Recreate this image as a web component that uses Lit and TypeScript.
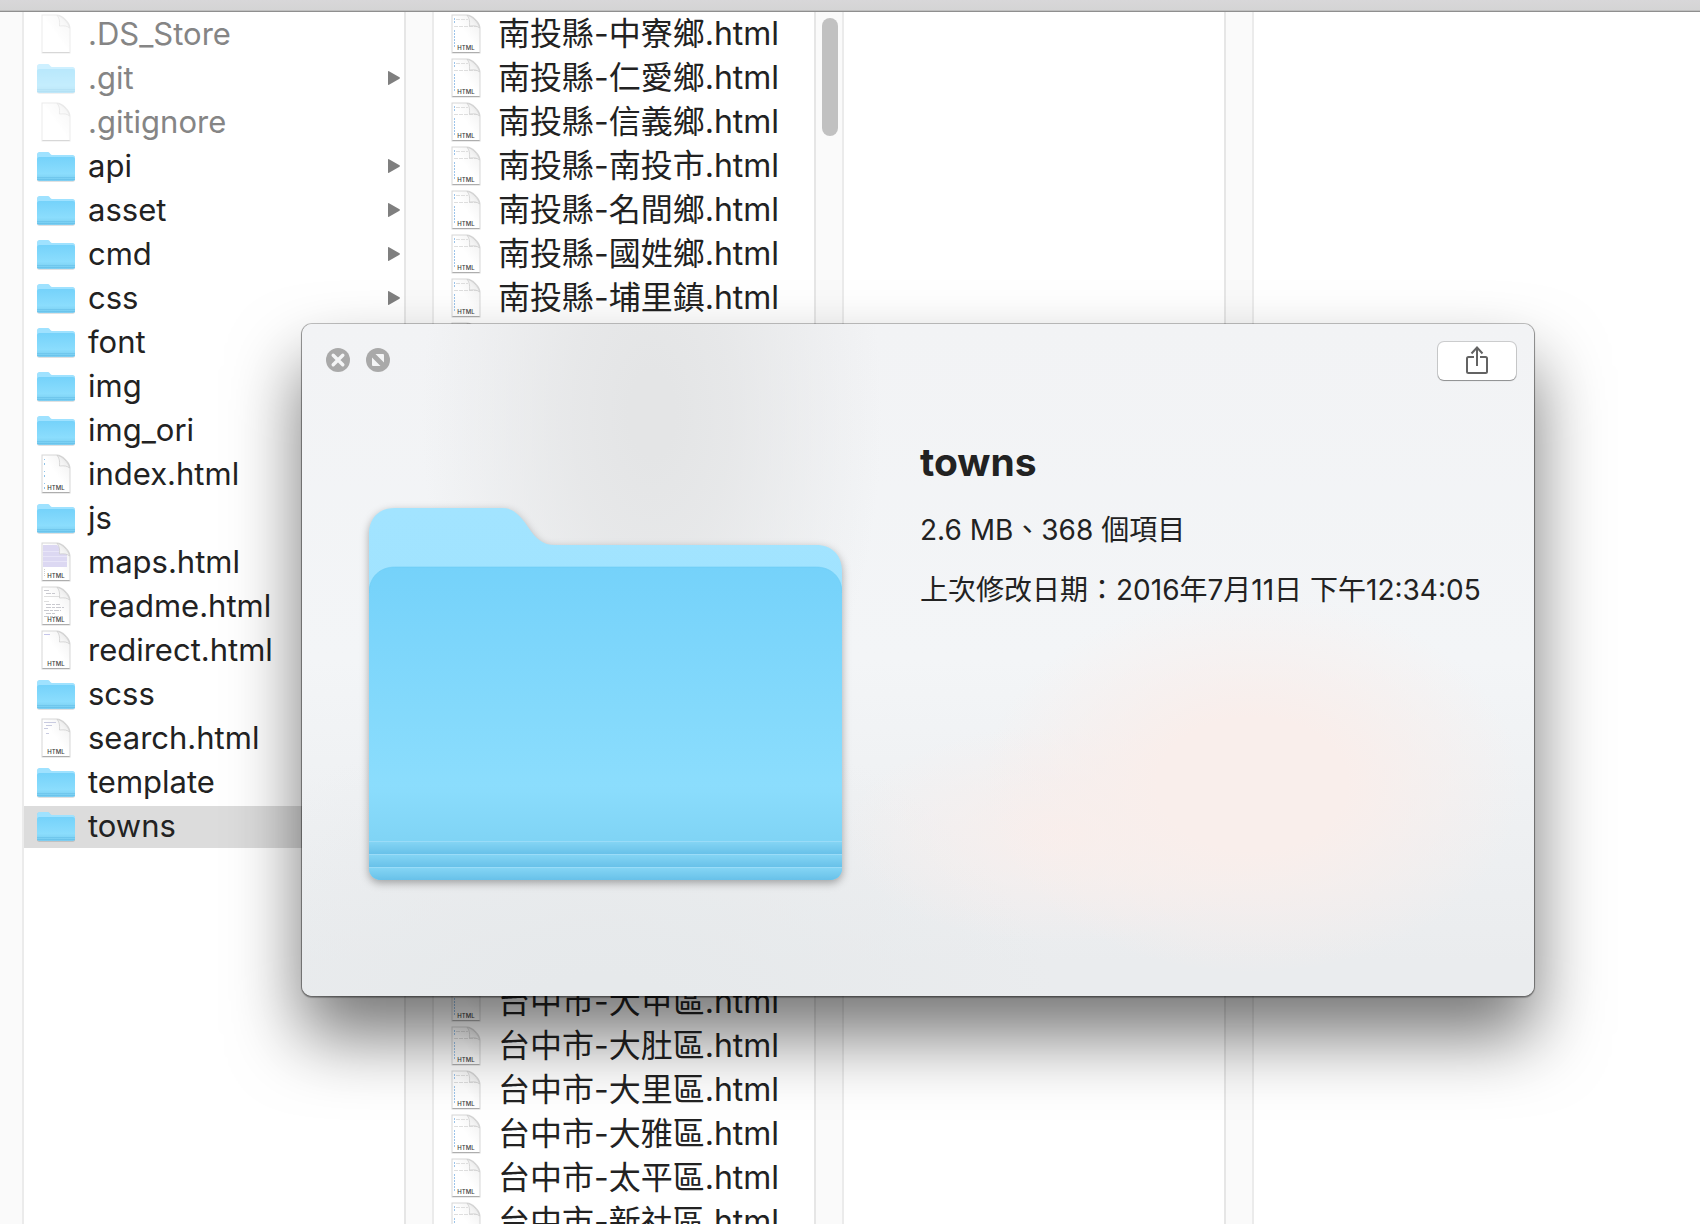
import { LitElement, html, css, svg, nothing } from "lit";
import { customElement, state } from "lit/decorators.js";
import { classMap } from "lit/directives/class-map.js";

type Preview = "none" | "code" | "maps" | "readme" | "redirect" | "search" | "index";
interface Entry {
  name: string;
  kind: "folder" | "file";
  preview?: Preview;
  hidden?: boolean;
}

const folder = (name: string, hidden = false): Entry => ({ name, kind: "folder", hidden });
const file = (name: string, preview: Preview, hidden = false): Entry => ({ name, kind: "file", preview, hidden });

const ROOT: Entry[] = [
  file(".DS_Store", "none", true),
  folder(".git", true),
  file(".gitignore", "none", true),
  folder("api"),
  folder("asset"),
  folder("cmd"),
  folder("css"),
  folder("font"),
  folder("img"),
  folder("img_ori"),
  file("index.html", "index"),
  folder("js"),
  file("maps.html", "maps"),
  file("readme.html", "readme"),
  file("redirect.html", "redirect"),
  folder("scss"),
  file("search.html", "search"),
  folder("template"),
  folder("towns"),
];

const TOWNS: Entry[] = [
  ...["中寮鄉", "仁愛鄉", "信義鄉", "南投市", "名間鄉", "國姓鄉", "埔里鎮", "水里鄉", "竹山鎮", "草屯鎮", "集集鎮", "魚池鄉", "鹿谷鄉"].map(
    (t) => file(`南投縣-${t}.html`, "code")
  ),
  ...["中區", "北區", "北屯區", "南區", "南屯區", "后里區", "和平區", "外埔區", "大安區", "大甲區", "大肚區", "大里區", "大雅區", "太平區", "新社區"].map(
    (t) => file(`台中市-${t}.html`, "code")
  ),
];

const previews: Record<Preview, unknown> = {
  none: nothing,
  index: svg`<path d="M8.5 5v30" stroke="#8fc3e8" stroke-width="1" stroke-dasharray="1 3 2 6" />`,
  code: svg`<path d="M8.500 4v5M8.500 16v18" stroke="#9cc4ea" stroke-width="1" stroke-dasharray="2 1" />
    <path d="M10 5.500h12M8 12.500h24" stroke="#dedede" stroke-width="1" stroke-dasharray="4 1" />`,
  maps: svg`<path d="M7 3h14l10 9v13H7z" fill="#dcd8f2" />
    <path d="M7 9.500h18M7 14.500h24M7 19.500h24" stroke="#e8e5f8" stroke-width="1" />
    <path d="M8.500 27v7" stroke="#d0d0d0" stroke-dasharray="1 1" />`,
  readme: svg`<path d="M8 4.500h6M10 7.500h10M10 18.500h14M10 21.500h18M8 24.500h17M10 27.500h9M8 30.500h20" stroke="#c9c9cf" stroke-width="1" stroke-dasharray="5 1 3 1" />
    <path d="M8 10.500h19M8 15.500h5" stroke="#dedede" />`,
  redirect: svg`<path d="M8 4.500h6" stroke="#c5c5ea" />`,
  search: svg`<path d="M8 4.500h12M10 7.500h6M8 10.500h4M10 15.500h3" stroke="#c9cbe0" stroke-width="1" />`,
};

const fileIcon = (preview: Preview) => html`
  <svg class="icon" viewBox="0 0 40 40" aria-hidden="true">
    <path d="M6.500 1.500h14.500c5 0 12.500 7.500 12.500 12.500v24.500h-27z" fill="none" stroke="#000" stroke-opacity=".16" stroke-width="2" />
    <path d="M6.500 1.500h14.500c5 0 12.500 7.500 12.500 12.500v24.500h-27z" fill="url(#paper)" />
    ${previews[preview]}
    <path d="M21 1.500c2 2 3 5 2.500 10.500 5-.5 8 0 10 2C33 9 26 1.500 21 1.500z" fill="url(#curl)" stroke="#c9c9c9" stroke-width=".7" />
    <path d="M6.500 38.500h27" stroke="#000" stroke-opacity=".26" />
    ${preview === "none"
      ? nothing
      : svg`<text x="20" y="36" text-anchor="middle" font-size="6" font-weight="500" fill="#3c3c3c">HTML</text>`}
  </svg>
`;

const folderIcon = html`
  <svg class="icon" viewBox="0 2 40 40" aria-hidden="true">
    <path d="M1 36V11.500C1 9.500 2 8.500 3.500 8.500H12c2 0 2 3 4 3h20.500c1.500 0 2.500 1 2.500 2.500V36c0 1-1 1.700-2 1.700H3C2 37.700 1 37 1 36z" fill="#000" fill-opacity=".16" />
    <path d="M1 35V11C1 9 2 8 3.500 8H12c2 0 2 3 4 3h20.500c1.500 0 2.500 1 2.500 2.500V35c0 1-1 1.700-2 1.700H3C2 36.700 1 36 1 35z" fill="#9fe2ff" />
    <path d="M1 15.500c0-1.500.8-2.500 2.200-2.500h33.600c1.400 0 2.200 1 2.200 2.500V35c0 1-1 1.700-2 1.700H3C2 36.700 1 36 1 35z" fill="url(#front)" />
    <path d="M1 33.500h38M1 35.500h38" stroke="#63bde6" stroke-width=".8" stroke-opacity=".7" />
  </svg>
`;

const bigFolder = html`
  <svg class="art" viewBox="0 0 473 372" role="img" aria-label="towns">
    <path
      d="M0 360V26C0 10 10 0 26 0H134c10 0 18 8 25 19 8 12 15 18 27 18H447c16 0 26 10 26 26V360c0 7-5 12-12 12H12c-7 0-12-5-12-12z"
      fill="url(#back)" />
    <path d="M0 360V85C0 69 11 59 26 59H447c15 0 26 10 26 26V360c0 7-5 12-12 12H12c-7 0-12-5-12-12z" fill="url(#front)" />
    <path d="M0 85C0 69 11 59 26 59H447c15 0 26 10 26 26" fill="none" stroke="#6ccbf3" stroke-opacity=".6" />
    <path d="M0 333h473v13H0z" fill="url(#fold)" />
    <path d="M0 346h473v13H0z" fill="url(#fold)" />
    <path d="M0 359h473v1c0 7-5 12-12 12H12c-7 0-12-5-12-12z" fill="url(#fold)" />
    <path d="M0 333.500h473M0 346.500h473M0 359.500h473" stroke="#9adcf8" />
  </svg>
`;

const defs = html`
  <svg class="defs" width="0" height="0" aria-hidden="true">
    <linearGradient id="paper" x1="0" y1="1" x2="1" y2="0">
      <stop offset=".5" stop-color="#fff" />
      <stop offset="1" stop-color="#efefef" />
    </linearGradient>
    <linearGradient id="curl" x1="0" y1="1" x2="1" y2="0">
      <stop offset="0" stop-color="#fff" />
      <stop offset=".5" stop-color="#f1f1f1" />
      <stop offset="1" stop-color="#d8d8d8" />
    </linearGradient>
    <linearGradient id="back" x1="0" y1="0" x2="0" y2="1">
      <stop offset="0" stop-color="#a2e4ff" />
      <stop offset="1" stop-color="#9fe1fe" />
    </linearGradient>
    <linearGradient id="front" x1="0" y1="0" x2="0" y2="1">
      <stop offset="0" stop-color="#75d2fa" />
      <stop offset=".7" stop-color="#8bddfd" />
      <stop offset=".87" stop-color="#80d4f5" />
      <stop offset="1" stop-color="#70c8f0" />
    </linearGradient>
    <linearGradient id="fold" x1="0" y1="0" x2="0" y2="1">
      <stop offset="0" stop-color="#86d6f5" />
      <stop offset="1" stop-color="#68c1e9" />
    </linearGradient>
  </svg>
`;

@customElement("app-root")
export class AppRoot extends LitElement {
  @state() private selected = "towns";

  static styles = css`
    :host {
      display: block;
      height: 100vh;
      overflow: hidden;
      position: relative;
      background: #fff;
      color: #222;
      font-family: Inter, "Noto Sans CJK TC", sans-serif;
    }
    .finder {
      display: flex;
      flex-direction: column;
      height: 100%;
    }
    .toolbar {
      flex: none;
      box-sizing: border-box;
      height: 12px;
      background: linear-gradient(#d8d7d9, #d4d4d4);
      border-bottom: 1px solid #8f8f8f;
      box-shadow: inset 0 -1px #bfbfbf;
    }
    .columns {
      flex: 1;
      min-height: 0;
      display: flex;
    }
    .gutter {
      flex: none;
      box-sizing: border-box;
      width: 30px;
      padding: 6px 4px 0 6px;
      background: #fafafa;
      border-left: 2px solid #e6e6e6;
      border-right: 2px solid #ebebeb;
    }
    .gutter.first {
      width: 24px;
      border-left: 0;
    }
    .thumb {
      height: 118px;
      border-radius: 8px;
      background: #c1c1c1;
    }
    .column {
      flex: none;
      width: 380px;
      margin: 0;
      padding: 0;
      list-style: none;
      overflow: hidden;
      font-size: 31px;
    }
    .column.towns {
      font-size: 32px;
    }
    .column.rest {
      flex: 1;
      width: auto;
    }
    .row {
      box-sizing: border-box;
      display: flex;
      align-items: center;
      gap: 12px;
      height: 44px;
      padding: 0 4px 2px 12px;
      border-top: 2px solid transparent;
      background-clip: padding-box;
      color: inherit;
      text-decoration: none;
      line-height: 40px;
      white-space: nowrap;
    }
    .row.selected {
      background-color: #dcdcdc;
    }
    .row.hidden .name {
      color: #858585;
    }
    .row.hidden .icon {
      opacity: 0.5;
    }
    .icon {
      flex: none;
      width: 40px;
      height: 40px;
    }
    .name {
      flex: 1;
    }
    .arrow {
      flex: none;
      width: 12px;
      height: 14px;
      fill: #7f7f7f;
    }
    .defs {
      position: absolute;
    }
    .panel {
      position: absolute;
      top: 324px;
      left: 302px;
      right: 166px;
      border-radius: 10px;
      background:
        radial-gradient(ellipse 230px 420px at 350px 90px, #e4e5e6 10%, #e4e5e6cc 35%, #e4e5e600 100%),
        radial-gradient(ellipse 270px 190px at 950px 460px, #f9eeeb 35%, #f9eeeb00 100%),
        radial-gradient(ellipse 220px 110px at 760px 510px, #f8eeec 0%, #f8eeec00 100%),
        radial-gradient(ellipse 460px 340px at 300px 720px, #e6e9eb 20%, #e6e9eb00 100%),
        linear-gradient(#f2f3f5 0%, #f3f5f7 50%, #eaecee 95%);
      box-shadow:
        0 0 0 1px rgba(0, 0, 0, 0.22),
        0 1px 1px 1px rgba(0, 0, 0, 0.25),
        0 40px 70px rgba(0, 0, 0, 0.54);
    }
    .bar {
      display: flex;
      align-items: flex-start;
      gap: 16px;
      padding: 18px 18px 0 24px;
    }
    button {
      padding: 0;
      border: 0;
      background: none;
      font: inherit;
    }
    .round {
      width: 24px;
      height: 24px;
      margin-top: 6px;
    }
    .round svg,
    .share svg {
      display: block;
    }
    .share {
      display: grid;
      place-items: center;
      width: 78px;
      height: 38px;
      margin-left: auto;
      border-radius: 6px;
      background: #fff;
      box-shadow:
        0 0 0 1px rgba(0, 0, 0, 0.16),
        0 1px 1px rgba(0, 0, 0, 0.3);
    }
    .content {
      display: flex;
      align-items: flex-start;
      gap: 78px;
      padding: 55px 24px 116px 67px;
    }
    .art {
      flex: none;
      width: 473px;
      margin-top: 73px;
      filter: drop-shadow(0 3px 4px rgba(0, 0, 0, 0.32));
    }
    .info {
      flex: 1;
      white-space: nowrap;
    }
    h1 {
      margin: 3px 0 14px;
      font-size: 39px;
      line-height: 48px;
      font-weight: 700;
    }
    p {
      margin: 0;
      font-size: 28px;
      line-height: 60px;
      font-weight: 400;
    }
  `;

  private select(e: Event, name: string) {
    e.preventDefault();
    this.selected = name;
  }

  private row(entry: Entry) {
    const classes = { row: true, hidden: !!entry.hidden, selected: entry.name === this.selected };
    return html`<li>
      <a class=${classMap(classes)} href="#" @click=${(e: Event) => this.select(e, entry.name)}>
        ${entry.kind === "folder" ? folderIcon : fileIcon(entry.preview ?? "none")}
        <span class="name">${entry.name}</span>
        ${entry.kind === "folder"
          ? html`<svg class="arrow" viewBox="0 0 12 14" aria-hidden="true"><path d="M0 .8Q0-.3 1 .3L11.500 6.300q.8.700 0 1.400L1 13.700Q0 14.300 0 13.200z" /></svg>`
          : nothing}
      </a>
    </li>`;
  }

  render() {
    return html`
      ${defs}
      <main class="finder">
        <div class="toolbar"></div>
        <div class="columns">
          <div class="gutter first"></div>
          <ul class="column">${ROOT.map((e) => this.row(e))}</ul>
          <div class="gutter"></div>
          <ul class="column towns">${TOWNS.map((e) => this.row(e))}</ul>
          <div class="gutter"><div class="thumb"></div></div>
          <div class="column"></div>
          <div class="gutter"></div>
          <div class="column rest"></div>
        </div>
      </main>
      <section class="panel" role="dialog" aria-labelledby="title">
        <div class="bar">
          <button class="round" aria-label="關閉">
            <svg width="24" height="24" viewBox="0 0 24 24">
              <circle cx="12" cy="12" r="12" fill="#a9a9a9" />
              <path d="M7.200 7.200l9.600 9.600M16.800 7.200l-9.600 9.600" stroke="#f4f5f6" stroke-width="3.400" stroke-linecap="round" />
            </svg>
          </button>
          <button class="round" aria-label="全螢幕">
            <svg width="24" height="24" viewBox="0 0 24 24">
              <circle cx="12" cy="12" r="12" fill="#a9a9a9" />
              <path d="M9.500 6H17q1 0 1 1v7.500zM6 9.500V17q0 1 1 1h7.500z" fill="#f4f5f6" />
            </svg>
          </button>
          <button class="share" aria-label="分享">
            <svg width="24" height="30" viewBox="0 0 24 30" fill="none" stroke="#636363" stroke-width="2">
              <path d="M9 11H3.500q-1.500 0-1.500 1.500V25.500q0 1.500 1.500 1.500h17q1.500 0 1.500-1.500V12.500q0-1.500-1.500-1.500H15" />
              <path d="M12 20V2M6.500 7.500L12 1.500l5.500 6" />
            </svg>
          </button>
        </div>
        <div class="content">
          ${bigFolder}
          <div class="info">
            <h1 id="title">towns</h1>
            <p>2.6 MB、368 個項目</p>
            <p>上次修改日期：2016年7月11日 下午12:34:05</p>
          </div>
        </div>
      </section>
    `;
  }
}
